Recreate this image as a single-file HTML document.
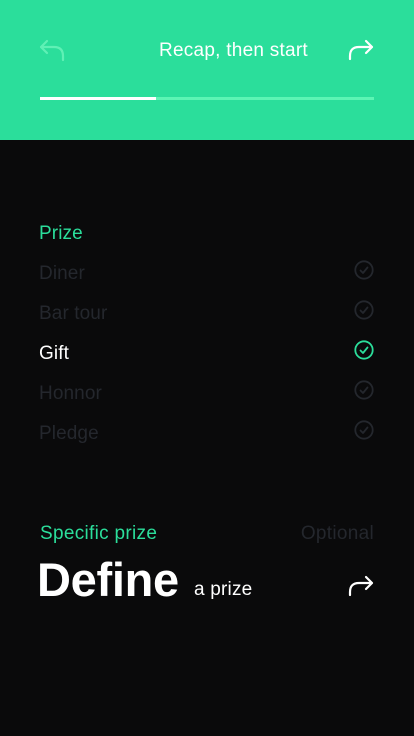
<!DOCTYPE html>
<html><head><meta charset="utf-8"><style>
*{margin:0;padding:0;box-sizing:border-box}
body{width:414px;height:736px;background:#0a0a0b;font-family:"Liberation Sans",sans-serif;position:relative;overflow:hidden}
.hdr{position:absolute;left:0;top:0;width:414px;height:140px;background:#2bde9b}
.t{position:absolute;white-space:nowrap;line-height:1;font-size:19px;letter-spacing:0.1px}
.grey{color:#24272d}
svg{position:absolute}
</style></head><body>
<div class="hdr">
<svg style="left:38px;top:38px" width="30" height="26" viewBox="0 0 30 26"><path d="M9 3 L3 9 L9 15 M3 9 H16 Q25 9 25 18 V22" fill="none" stroke="#5ff0b5" stroke-width="2.2" stroke-linecap="round" stroke-linejoin="round"/></svg>
<div class="t" style="left:159px;top:41px;color:#fff;letter-spacing:0.25px">Recap, then start</div>
<svg style="left:346px;top:38px" width="30" height="26" viewBox="0 0 30 26"><path d="M20 3 L26 9 L20 15 M26 9 H13 Q4 9 4 18 V21" fill="none" stroke="#fff" stroke-width="2.2" stroke-linecap="round" stroke-linejoin="round"/></svg>
<div style="position:absolute;left:40px;top:97px;width:334px;height:3px;background:#5cf5b4"></div>
<div style="position:absolute;left:40px;top:97px;width:116px;height:3px;background:#fff"></div>
</div>
<div class="t" style="left:39px;top:224px;color:#2bde9b">Prize</div>
<div class="t grey" style="left:39px;top:264px">Diner</div>
<div class="t grey" style="left:39px;top:304px">Bar tour</div>
<div class="t" style="left:39px;top:344px;color:#fff">Gift</div>
<div class="t grey" style="left:39px;top:384px">Honnor</div>
<div class="t grey" style="left:39px;top:424px">Pledge</div>
<svg style="left:354px;top:260px" width="20" height="180" viewBox="0 0 20 180">
<g fill="none" stroke-width="1.8" stroke-linecap="round" stroke-linejoin="round">
<g stroke="#24272d"><circle cx="10" cy="10" r="8.7"/><path d="M6.5 10.5 L9 13 L13.5 7.5"/></g>
<g stroke="#24272d"><circle cx="10" cy="50" r="8.7"/><path d="M6.5 50.5 L9 53 L13.5 47.5"/></g>
<g stroke="#2bde9b"><circle cx="10" cy="90" r="8.7"/><path d="M6.5 90.5 L9 93 L13.5 87.5"/></g>
<g stroke="#24272d"><circle cx="10" cy="130" r="8.7"/><path d="M6.5 130.5 L9 133 L13.5 127.5"/></g>
<g stroke="#24272d"><circle cx="10" cy="170" r="8.7"/><path d="M6.5 170.5 L9 173 L13.5 167.5"/></g>
</g></svg>
<div class="t" style="left:40px;top:524px;color:#2bde9b;letter-spacing:0.3px">Specific prize</div>
<div class="t grey" style="right:40px;top:524px;letter-spacing:0.3px">Optional</div>
<div class="t" style="left:37px;top:556px;font-size:47px;font-weight:bold;color:#fff;letter-spacing:-0.3px">Define</div>
<div class="t" style="left:194px;top:580px;color:#fff;letter-spacing:0.2px">a prize</div>
<svg style="left:346px;top:574px" width="30" height="26" viewBox="0 0 30 26"><path d="M20 3 L26 9 L20 15 M26 9 H13 Q4 9 4 18 V21" fill="none" stroke="#fff" stroke-width="2.2" stroke-linecap="round" stroke-linejoin="round"/></svg>
</body></html>
